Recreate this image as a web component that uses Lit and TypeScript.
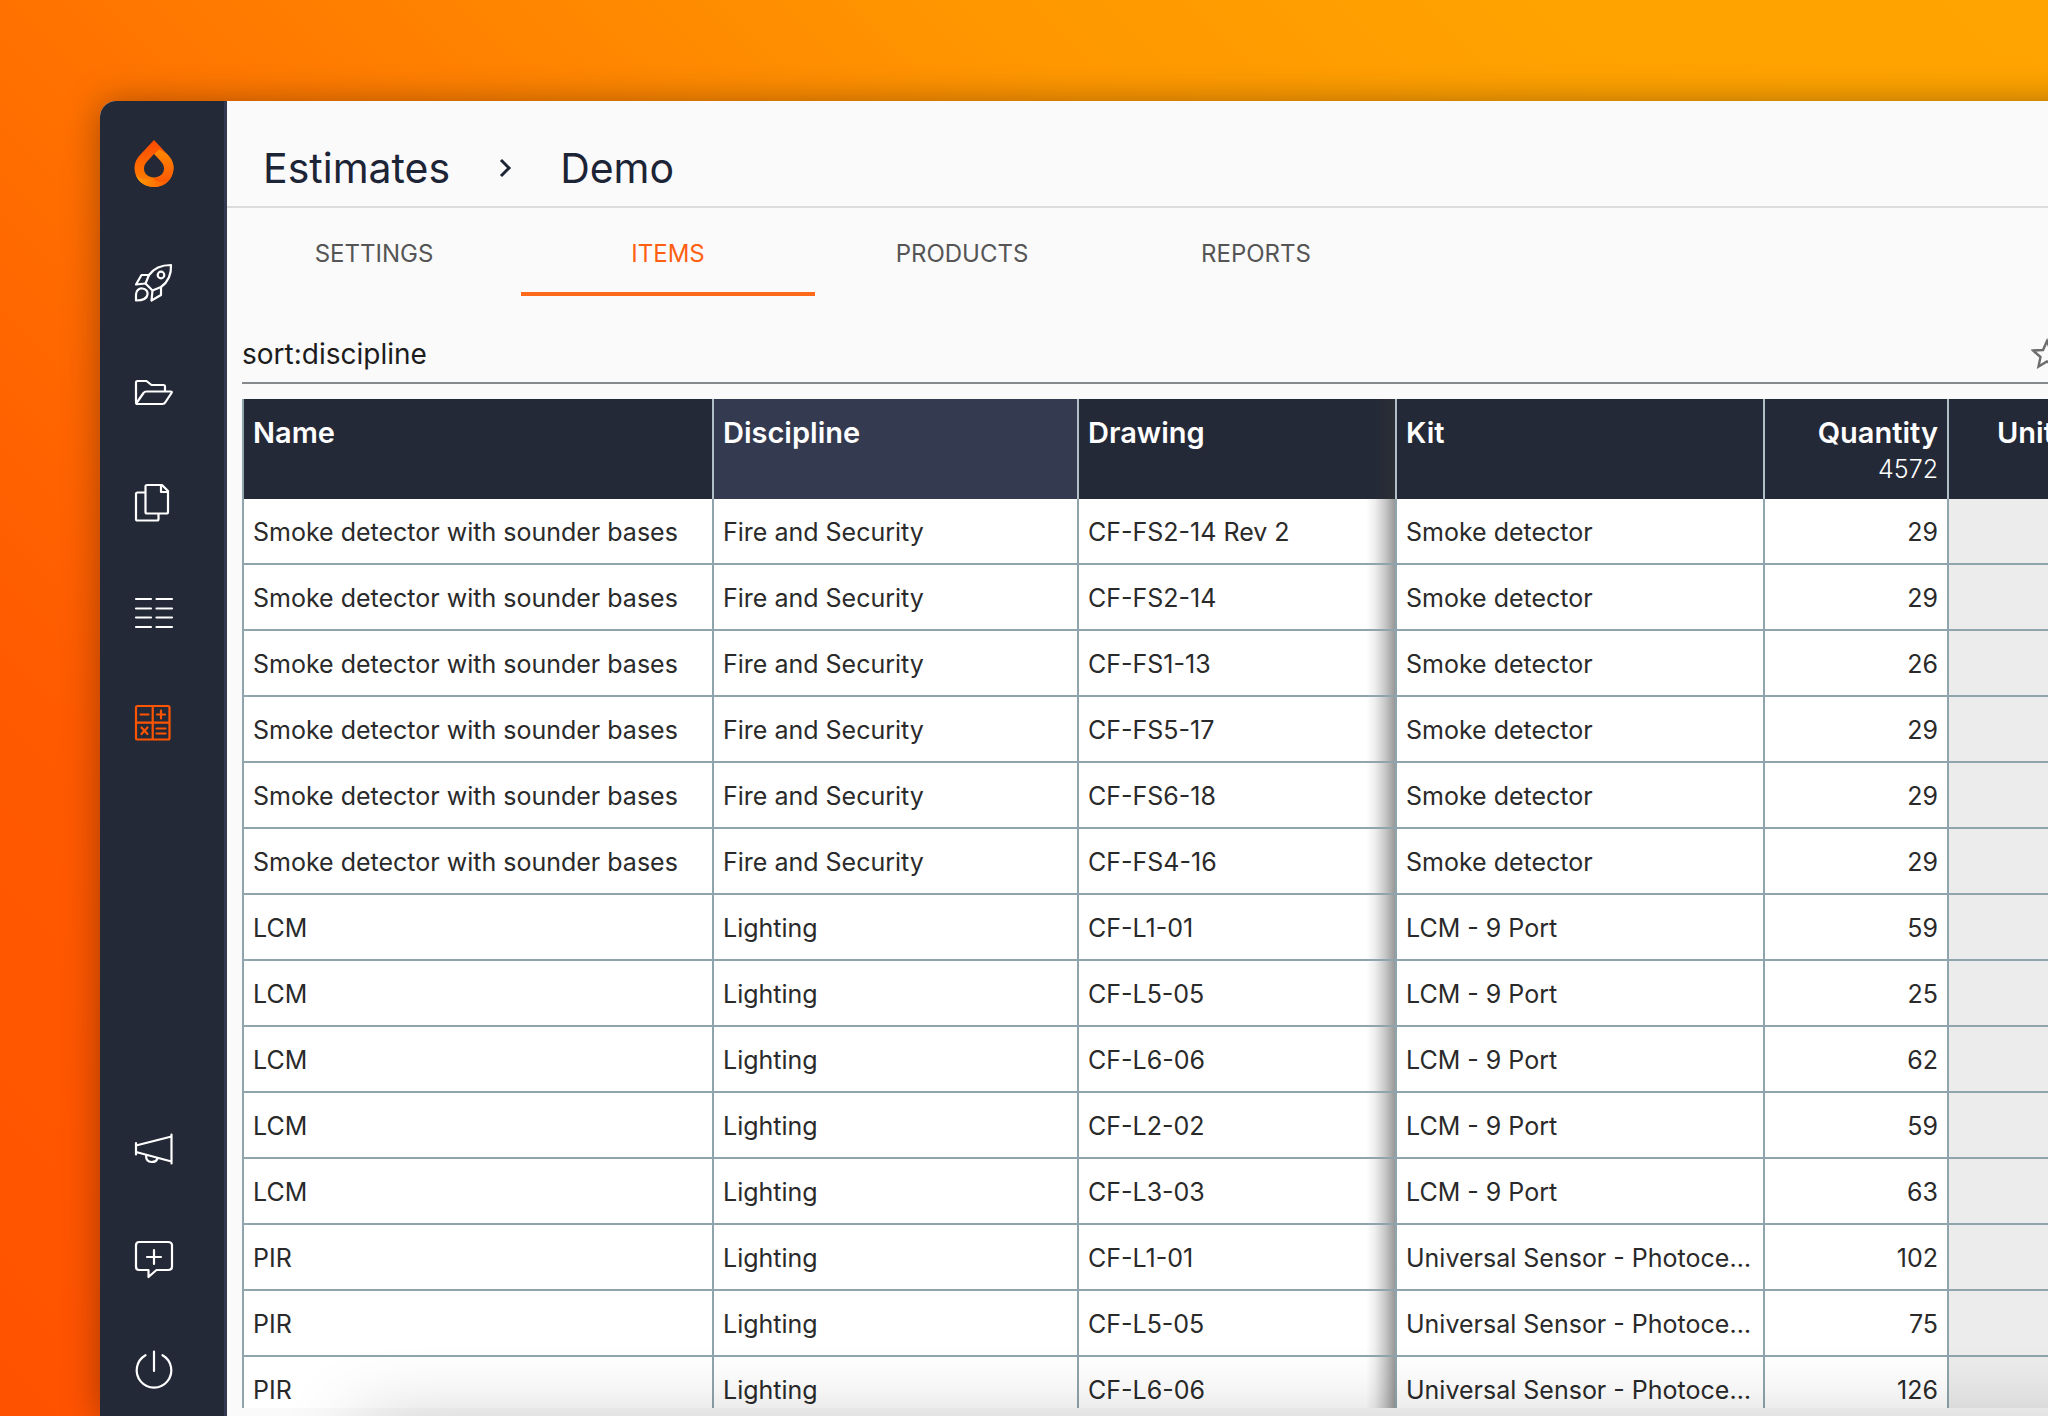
import { LitElement, html, css, svg } from "lit";
import { customElement, property } from "lit/decorators.js";

type Row = [string, string, string, string, number];

const SD = "Smoke detector with sounder bases";
const FS = "Fire and Security";
const US = "Universal Sensor - Photocell and PIR";

const rows: Row[] = [
  [SD, FS, "CF-FS2-14 Rev 2", "Smoke detector", 29],
  [SD, FS, "CF-FS2-14", "Smoke detector", 29],
  [SD, FS, "CF-FS1-13", "Smoke detector", 26],
  [SD, FS, "CF-FS5-17", "Smoke detector", 29],
  [SD, FS, "CF-FS6-18", "Smoke detector", 29],
  [SD, FS, "CF-FS4-16", "Smoke detector", 29],
  ["LCM", "Lighting", "CF-L1-01", "LCM - 9 Port", 59],
  ["LCM", "Lighting", "CF-L5-05", "LCM - 9 Port", 25],
  ["LCM", "Lighting", "CF-L6-06", "LCM - 9 Port", 62],
  ["LCM", "Lighting", "CF-L2-02", "LCM - 9 Port", 59],
  ["LCM", "Lighting", "CF-L3-03", "LCM - 9 Port", 63],
  ["PIR", "Lighting", "CF-L1-01", US, 102],
  ["PIR", "Lighting", "CF-L5-05", US, 75],
  ["PIR", "Lighting", "CF-L6-06", US, 126],
];

const glyphs = {
  rocket: svg`<path d="M37 2C27 2 20 5 15 12L11.500 20.500L18.500 27.500L27 24C34 19 37.500 12 37 2Z"/><circle cx="27" cy="12" r="3.300"/><path d="M15 12H7.500L2 21.500L11.500 20.500"/><path d="M27 24V32L17.500 37.500L18.500 27.500"/><path d="M2 37.500V31.500C2 27.500 5 25 8.500 25.500C12 26 14 28.500 13.500 31.500C13 35.500 10 37.500 2 37.500Z"/>`,
  folder: svg`<path d="M2 29V9.500Q2 8 3.500 8H12.500L17.500 12H29.500Q31 12 31 13.500V18"/><path d="M2 29.500Q2 31 3.500 31H28.500Q30.500 31 31.500 29L37.500 20Q38.500 18.500 36.500 18.500H12.500Q10.500 18.500 9.500 20L2.500 30"/>`,
  copy: svg`<path d="M11 9.500H3.500Q2 9.500 2 11V36Q2 37.500 3.500 37.500H23Q24.500 37.500 24.500 36V31"/><path d="M28 2H13Q11.500 2 11.500 3.500V29Q11.500 30.500 13 30.500H32.500Q34 30.500 34 29V8ZM27 2V9H34"/>`,
  list: svg`<path d="M2 6H17M22.500 6H38M2 15.500H17M22.500 15.500H38M2 24.500H17M22.500 24.500H38M2 34H17M22.500 34H38"/>`,
  calc: svg`<path d="M3.500 3H34Q35.500 3 35.500 4.500V35Q35.500 36.500 34 36.500H3.500Q2 36.500 2 35V4.500Q2 3 3.500 3ZM18.700 3V36.500M2 19.700H35.500M6.500 11.500H14.500M23 11.500H31M27 7.500V15.500M7.500 24.500L13.500 31M13.500 24.500L7.500 31M22.500 25.500H31.500M22.500 30.500H31.500"/>`,
  megaphone: svg`<path d="M2 14V25.500M2 16.500L37.500 7.500M2 23L37.500 32.500M37.500 5.500V34.500M12 26Q12 33 17.500 33Q23 33 23.500 29"/>`,
  comment: svg`<path d="M5 3H34Q38 3 38 6.500V27.500Q38 31 34 31H22.500L14.500 38V31H5Q2 31 2 27.500V6.500Q2 3 5 3ZM20 11V25M13 18H27"/>`,
  power: svg`<path d="M20 2.500V22M11.500 6.200A17.300 17.300 0 1 0 28.500 6.200"/>`,
};

@customElement("nav-icon")
class NavIcon extends LitElement {
  @property() name: keyof typeof glyphs = "rocket";
  static styles = css`
    :host { display: block; width: 40px; height: 40px; }
    svg {
      display: block; width: 100%; height: 100%; fill: none;
      stroke: currentColor; stroke-width: 2.2; stroke-linejoin: round; stroke-linecap: round;
    }
  `;
  render() {
    return html`<svg viewBox="0 0 40 40" aria-hidden="true">${glyphs[this.name]}</svg>`;
  }
}

@customElement("side-nav")
class SideNav extends LitElement {
  static styles = css`
    :host {
      display: flex; box-sizing: border-box; flex-direction: column; align-items: flex-start;
      width: 127px; flex: none; padding: 39px 0 27px 34px;
      background: #242938; border-right: 3px solid #323950;
    }
    a { display: block; color: #fff; }
    .logo svg { display: block; width: 40px; height: 48px; }
    .group { display: flex; flex-direction: column; gap: 70px; }
    .top { margin-top: 75px; }
    .bottom { margin-top: auto; }
    .active { color: #ff5500; }
  `;
  private link(name: string, label: string, active = false) {
    return html`<a href="#${name}" class=${active ? "active" : ""} aria-label=${label}>
      <nav-icon name=${name}></nav-icon></a>`;
  }
  render() {
    return html`
      <a class="logo" href="#home" aria-label="Home">
        <svg viewBox="0 0 40 48" aria-hidden="true">
          <defs>
            <linearGradient id="a" x1="0" y1="0" x2="0" y2="1">
              <stop offset="0" stop-color="#ff4a00" /><stop offset="1" stop-color="#ff8400" />
            </linearGradient>
            <linearGradient id="b" x1="0" y1="0" x2="0" y2="1">
              <stop offset="0" stop-color="#ff8a00" /><stop offset="1" stop-color="#ff5000" />
            </linearGradient>
            <linearGradient id="c" x1="0" y1="0" x2="1" y2="0">
              <stop offset="0" stop-color="#ff9c00" /><stop offset="1" stop-color="#ff5a00" />
            </linearGradient>
          </defs>
          <path fill="url(#a)" d="M20 0L6.500 14.500C2.500 18.500 0.500 22.500 0.500 28C0.500 38.500 9 47 20 47C31 47 39.500 38.500 39.500 28C39.500 22.500 37.500 18.500 33.500 14.500Z" />
          <path fill="url(#b)" d="M25.500 9.500L33.500 14.500C37.500 19 39.500 22.500 39.500 28C39.500 38.500 31 47 20 47V38C26 38 30 34 30 28.500C30 24 27 21 20 14Z" />
          <path fill="url(#c)" d="M1.500 34C4 42 11 47 20 47C26 47 31 44.500 34.500 41C24 44 20 38 11 39Q4 39 1.500 34Z" />
          <path fill="#242938" d="M20 14L14 20.500C11.500 23 10 25.500 10 28.500C10 34 14.500 37.500 20 37.500C25.500 37.500 30 34 30 28.500C30 25.500 28.500 23 26 20.500Z" />
        </svg>
      </a>
      <nav class="group top" aria-label="Main">
        ${this.link("rocket", "Launch")} ${this.link("folder", "Projects")}
        ${this.link("copy", "Documents")} ${this.link("list", "Lists")}
        ${this.link("calc", "Estimates", true)}
      </nav>
      <nav class="group bottom" aria-label="Support">
        ${this.link("megaphone", "News")} ${this.link("comment", "Feedback")}
        ${this.link("power", "Log out")}
      </nav>
    `;
  }
}

@customElement("items-table")
class ItemsTable extends LitElement {
  static styles = css`
    :host { display: block; }
    table { width: 100%; border-collapse: separate; border-spacing: 0; table-layout: fixed; border-left: 2px solid #90a4ae; }
    .name { width: 470px; } .discipline { width: 365px; } .drawing { width: 318px; }
    .kit { width: 368px; } .quantity { width: 184px; }
    th, td {
      box-sizing: border-box; padding: 0 9px; text-align: left;
      border-right: 2px solid #90a4ae; overflow: hidden; white-space: nowrap; text-overflow: ellipsis;
    }
    th:last-child, td:last-child { border-right: 0; }
    th {
      height: 100px; padding-top: 17px; vertical-align: top; background: #242938; color: #fff;
      font-size: 29px; line-height: 34px; font-weight: 600; border-right-color: #b0bec5;
    }
    th.sorted { background: #343a50; }
    th.unit { padding-left: 48px; }
    th .total { display: block; font-size: 25px; line-height: 38px; font-weight: 300; }
    td {
      height: 66px; padding-top: 2px; font-size: 25px; line-height: 32px; font-weight: 400; color: #2a2a2a;
      background: #fff; border-bottom: 2px solid #90a4ae;
    }
    th.num, td.num { text-align: right; }
    td.unit { background: #ececec; }
    td.edge { background: linear-gradient(to left, #989898 0, #c8c8c8 10px, #eee 20px, #fff 29px); }
    th.edge { background: linear-gradient(to left, #2d2f34, #242938 20px); }
  `;
  render() {
    return html`
      <table>
        <colgroup>
          <col class="name" /><col class="discipline" /><col class="drawing" />
          <col class="kit" /><col class="quantity" /><col />
        </colgroup>
        <thead>
          <tr>
            <th scope="col">Name</th>
            <th scope="col" class="sorted" aria-sort="ascending">Discipline</th>
            <th scope="col" class="edge">Drawing</th>
            <th scope="col">Kit</th>
            <th scope="col" class="num">Quantity<span class="total">4572</span></th>
            <th scope="col" class="unit">Unit</th>
          </tr>
        </thead>
        <tbody>
          ${rows.map(([name, discipline, drawing, kit, quantity]) => html`
            <tr>
              <td>${name}</td><td>${discipline}</td><td class="edge">${drawing}</td>
              <td>${kit}</td><td class="num">${quantity}</td><td class="unit"></td>
            </tr>`)}
        </tbody>
      </table>
    `;
  }
}

@customElement("app-root")
class AppRoot extends LitElement {
  static styles = css`
    :host {
      display: flex; box-sizing: border-box; height: 100vh; padding: 101px 0 0 100px; overflow: hidden;
      font-family: Inter, "Liberation Sans", sans-serif;
      background: linear-gradient(45deg, #ff5200 0%, #ff5a00 22%, #ff7200 41%, #ff9700 69%, #ffa200 84%, #ffa400 100%);
    }
    /* The window runs past the right side of the viewport. */
    .frame {
      display: flex; flex: 1; min-width: 0; margin-right: -60px;
      border-radius: 16px 0 0 0; box-shadow: 0 2px 36px rgba(0, 0, 0, 0.36);
    }
    .window {
      display: flex; flex: 1; min-width: 0; position: relative; overflow: hidden;
      border-radius: 16px 0 0 0; background: #fafafa;
    }
    main { display: flex; flex-direction: column; flex: 1; min-width: 0; }
    .crumbs {
      display: flex; align-items: center; box-sizing: border-box; height: 107px; padding: 28px 36px 0;
      border-bottom: 2px solid #dcdcdc; font-size: 41px; line-height: 52px; font-weight: 400; color: #1c2436;
    }
    .crumbs a { color: inherit; text-decoration: none; }
    .crumbs svg { width: 20px; height: 20px; margin: 0 45px; fill: none; stroke: currentColor; stroke-width: 3; }
    .tabs { display: flex; }
    .tab {
      width: 294px; height: 88px; padding: 7px 0 0; border: 0; border-bottom: 4px solid transparent;
      background: none; font: 400 24px/32px Inter, "Liberation Sans", sans-serif; color: #555;
    }
    .tab.active { color: #ff5f10; border-bottom-color: #ff6a1a; }
    .search {
      display: flex; align-items: center; margin: 26px 0 15px 15px; height: 60px;
      border-bottom: 2px solid #868a8c;
    }
    .search input {
      flex: 1; min-width: 0; padding: 4px 0 0; border: 0; outline: 0; background: none;
      font: 400 28px/40px Inter, "Liberation Sans", sans-serif; color: #1c1c1c;
    }
    .star { flex: none; margin: 4px 45px 0 0; padding: 0; border: 0; background: none; color: #6c6c6c; }
    .star svg { display: block; width: 32px; height: 32px; fill: none; stroke: currentColor; stroke-width: 2.4; }
    .grid { flex: 1; min-height: 0; overflow: hidden; margin: 0 0 8px 15px; }
    .dock {
      position: absolute; left: 268px; right: -100px; bottom: -60px; height: 40px;
      box-shadow: 0 0 80px 10px rgba(0, 0, 0, 0.24); pointer-events: none;
    }
  `;
  render() {
    return html`
      <div class="frame">
        <div class="window">
          <side-nav></side-nav>
          <main>
            <nav class="crumbs" aria-label="Breadcrumb">
              <a href="#estimates">Estimates</a>
              <svg viewBox="0 0 20 20" aria-hidden="true"><path d="M6 2L14 10L6 18" /></svg>
              <a href="#demo">Demo</a>
            </nav>
            <div class="tabs" role="tablist">
              ${["SETTINGS", "ITEMS", "PRODUCTS", "REPORTS"].map((label) => html`
                <button role="tab" aria-selected=${label === "ITEMS"}
                  class="tab ${label === "ITEMS" ? "active" : ""}">${label}</button>`)}
            </div>
            <div class="search">
              <input type="text" aria-label="Search items" value="sort:discipline" />
              <button class="star" aria-label="Save search">
                <svg viewBox="0 0 32 32" aria-hidden="true">
                  <path d="M16 3L19.500 12L29.500 12.500L22 19L24.500 28.500L16 23.500L7.500 28.500L9.500 19L2 12.500L12 12Z" />
                </svg>
              </button>
            </div>
            <div class="grid"><items-table></items-table></div>
          </main>
          <div class="dock"></div>
        </div>
      </div>
    `;
  }
}
